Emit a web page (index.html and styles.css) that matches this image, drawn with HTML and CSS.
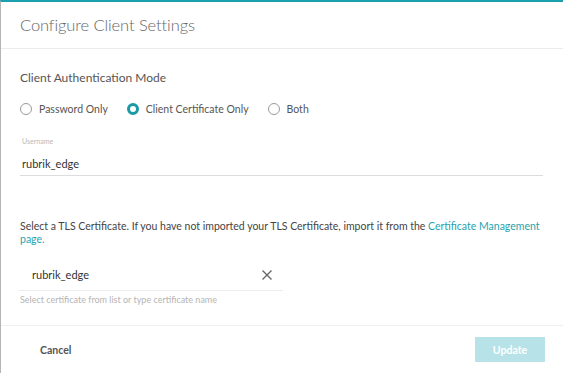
FILE: index.html
```html
<!DOCTYPE html>
<html lang="en">
<head>
<meta charset="utf-8">
<title>Configure Client Settings</title>
<link rel="stylesheet" href="styles.css">
</head>
<body>
<div class="dialog">
  <header class="head">
    <h1 class="title">Configure Client Settings</h1>
  </header>
  <section class="body">
    <div class="section-label">Client Authentication Mode</div>
    <div class="radios">
      <label class="radio"><span class="dot"></span><span>Password Only</span></label>
      <label class="radio"><span class="dot on"></span><span>Client Certificate Only</span></label>
      <label class="radio"><span class="dot"></span><span>Both</span></label>
    </div>
    <div class="field">
      <div class="field-label">Username</div>
      <div class="field-value">rubrik_edge</div>
    </div>
    <p class="note">Select a TLS Certificate. If you have not imported your TLS Certificate, import it from the <a class="link" href="#">Certificate Management</a><br><a class="link" href="#">page.</a></p>
    <div class="combo">
      <span class="combo-value">rubrik_edge</span>
      <svg class="clear" width="12" height="12" viewBox="0 0 12 12"><path d="M1.5 1.5L10.5 10.5M10.5 1.5L1.5 10.5" stroke="#666" stroke-width="1.4" fill="none"/></svg>
    </div>
    <div class="hint">Select certificate from list or type certificate name</div>
  </section>
  <footer class="foot">
    <button class="btn-cancel">Cancel</button>
    <button class="btn-update">Update</button>
  </footer>
</div>
</body>
</html>
```

FILE: styles.css
```css
html, body {
  margin: 0;
  padding: 0;
  background: #fff;
}
body {
  font-family: Lato, "Open Sans", sans-serif;
  color: #444;
}
.dialog {
  width: 563px;
  height: 373px;
  box-sizing: border-box;
  border-top: 2px solid #1ba1ad;
  border-left: 1px solid #b5b5b5;
  display: flex;
  flex-direction: column;
  background: #fff;
}
.head {
  height: 46px;
  display: flex;
  align-items: center;
  padding-left: 19px;
  border-bottom: 1px solid #ececec;
}
.title {
  margin: 0;
  font-size: 16.5px;
  font-weight: 300;
  color: #666;
  letter-spacing: -0.1px;
}
.body {
  flex: 1;
  padding: 22px 19px 0 19px;
  border-bottom: 1px solid #efefef;
}
.section-label {
  font-size: 12px;
  line-height: 14px;
  color: #555;
}
.radios {
  margin-top: 16px;
  display: flex;
  gap: 19px;
  height: 16px;
  align-items: center;
}
.radio {
  display: flex;
  align-items: center;
  gap: 7px;
  font-size: 10.5px;
  color: #555;
}
.dot {
  width: 12px;
  height: 12px;
  box-sizing: border-box;
  border: 1px solid #9a9a9a;
  border-radius: 50%;
  background: #fff;
}
.dot.on {
  border: 3.5px solid #1a9aa5;
}
.field {
  margin-top: 20px;
  border-bottom: 1px solid #dcdcdc;
  padding-bottom: 4px;
  margin-right: 1px;
}
.field-label {
  font-size: 7px;
  line-height: 9px;
  color: #b8b8b8;
  padding-left: 2px;
}
.field-value {
  margin-top: 11px;
  font-size: 11px;
  line-height: 14px;
  color: #333;
  padding-left: 2px;
}
.note {
  margin: 44px 0 0 0;
  font-size: 10.5px;
  line-height: 13px;
  color: #444;
}
.link {
  color: #1fa3b0;
  text-decoration: none;
}
.combo {
  margin-top: 13px;
  width: 264px;
  height: 32px;
  box-sizing: border-box;
  border-bottom: 1px solid #ececec;
  display: flex;
  align-items: center;
  justify-content: space-between;
  padding: 0 10px 0 13px;
  margin-left: -1px;
}
.combo-value {
  font-size: 11px;
  color: #333;
}
.hint {
  margin-top: 4px;
  font-size: 9px;
  line-height: 10px;
  color: #b5b5b5;
}
.foot {
  height: 47px;
  display: flex;
  align-items: center;
  justify-content: space-between;
  padding: 0 18px 0 20px;
}
.btn-cancel {
  border: 0;
  background: none;
  font-family: inherit;
  font-weight: 700;
  font-size: 10.5px;
  color: #555;
  padding: 0 0 0 19px;
}
.btn-update {
  width: 70px;
  height: 25px;
  border: 0;
  background: #b7e2e7;
  color: #fff;
  font-family: inherit;
  font-weight: 700;
  font-size: 10.5px;
}
```
